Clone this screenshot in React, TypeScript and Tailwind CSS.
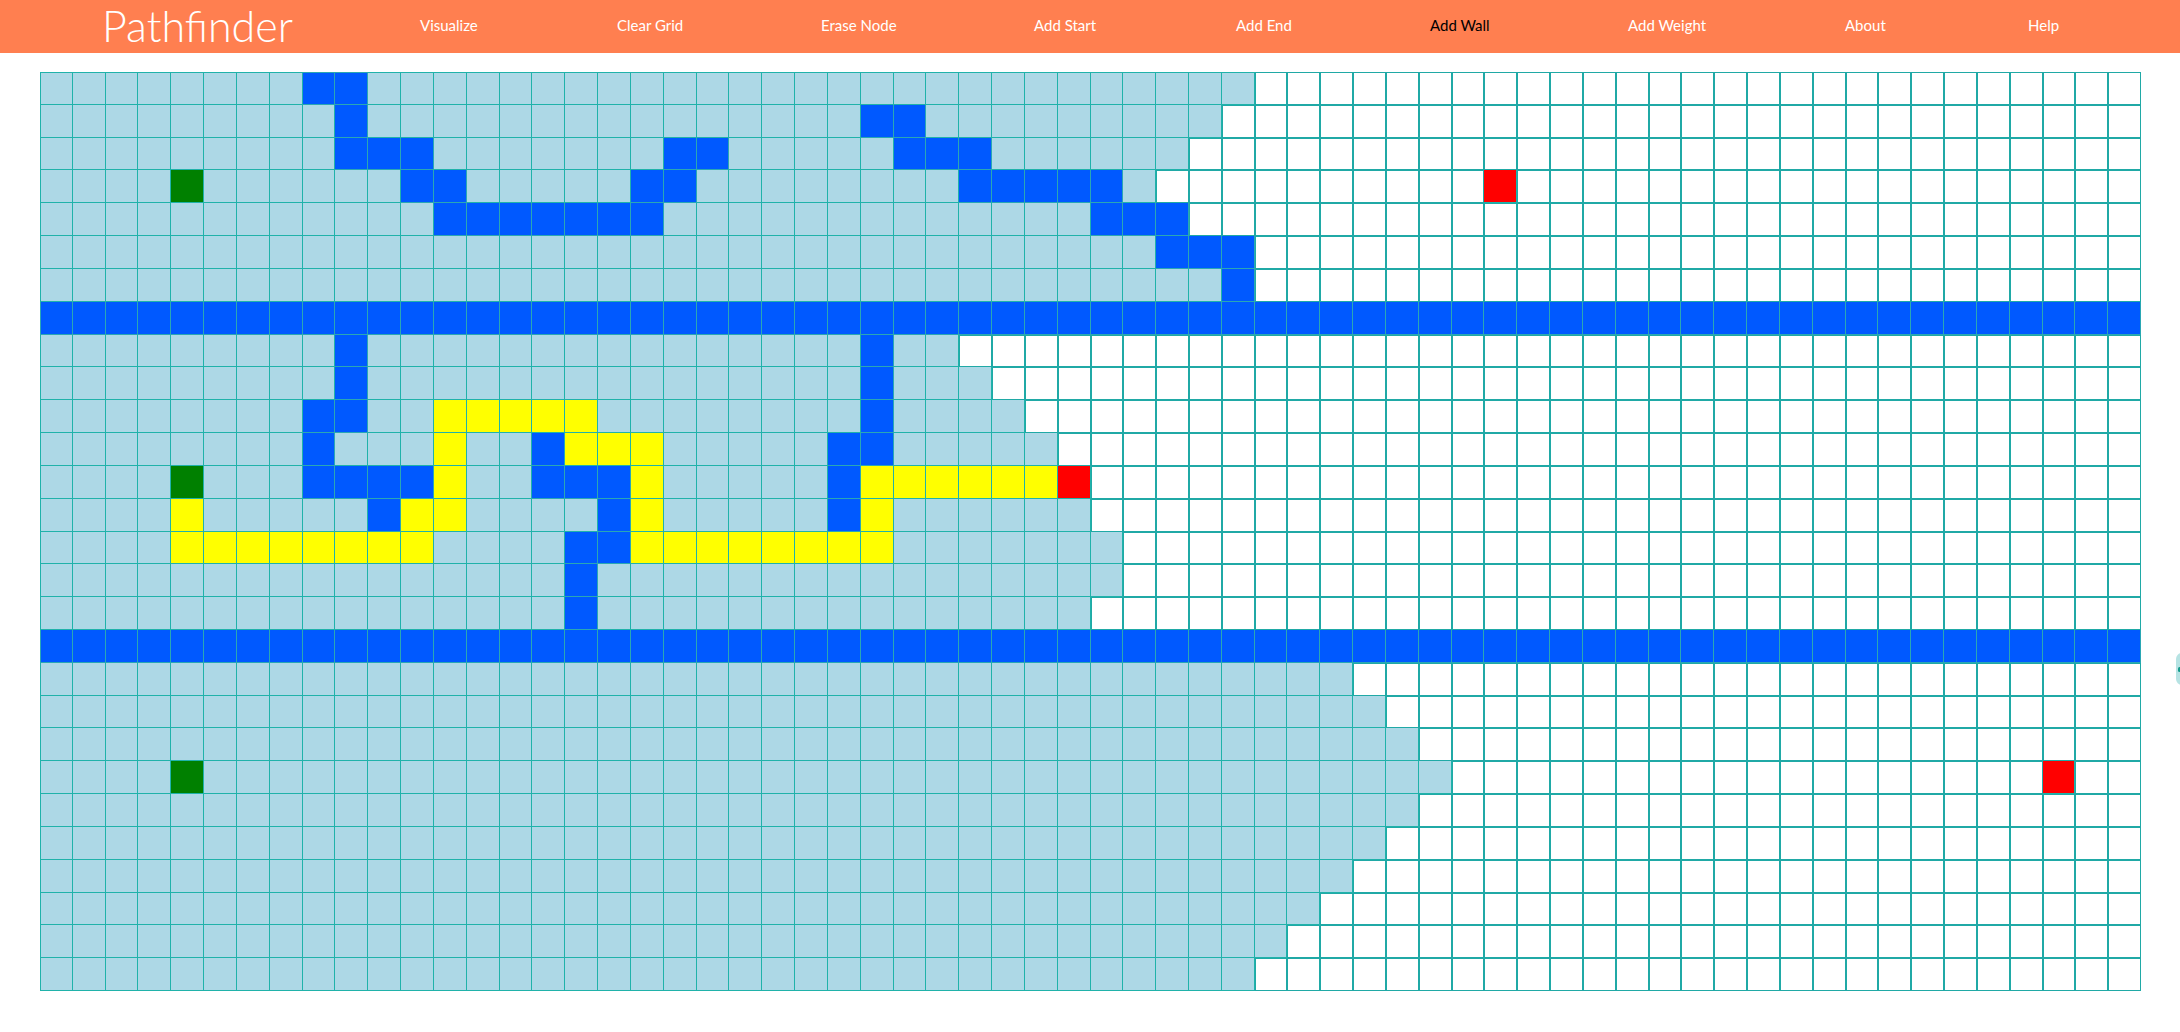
import { useMemo } from "react";

type CellKind = "empty" | "visited" | "wall" | "path" | "start" | "end";

type RowSpec = {
  visited: number;
  walls?: number[];
  path?: number[];
  start?: number;
  end?: number;
  fullWall?: boolean;
};

const COLS = 64;

const range = (a: number, b: number) => Array.from({ length: b - a + 1 }, (_, i) => a + i);

const ROWS: RowSpec[] = [
  { visited: 36, walls: [8, 9] },
  { visited: 35, walls: [9, 25, 26] },
  { visited: 34, walls: [9, 10, 11, 19, 20, 26, 27, 28] },
  { visited: 33, walls: [11, 12, 18, 19, ...range(28, 32)], start: 4, end: 44 },
  { visited: 31, walls: [...range(12, 18), 32, 33, 34] },
  { visited: 33, walls: [34, 35, 36] },
  { visited: 35, walls: [36] },
  { visited: -1, fullWall: true },
  { visited: 27, walls: [9, 25] },
  { visited: 28, walls: [9, 25] },
  { visited: 29, walls: [8, 9, 25], path: range(12, 16) },
  { visited: 30, walls: [8, 15, 24, 25], path: [12, 16, 17, 18] },
  { visited: 30, walls: [8, 9, 10, 11, 15, 16, 17, 24], path: [12, 18, ...range(25, 30)], start: 4, end: 31 },
  { visited: 31, walls: [10, 17, 24], path: [4, 11, 12, 18, 25] },
  { visited: 32, walls: [16, 17], path: [...range(4, 11), ...range(18, 25)] },
  { visited: 32, walls: [16] },
  { visited: 31, walls: [16] },
  { visited: -1, fullWall: true },
  { visited: 39 },
  { visited: 40 },
  { visited: 41 },
  { visited: 42, start: 4, end: 61 },
  { visited: 41 },
  { visited: 40 },
  { visited: 39 },
  { visited: 38 },
  { visited: 37 },
  { visited: 36 },
];

const NAV = [
  { label: "Visualize", w: "w-[52px]" },
  { label: "Clear Grid", w: "w-[59px]" },
  { label: "Erase Node", w: "w-[68px]" },
  { label: "Add Start", w: "w-[57px]" },
  { label: "Add End", w: "w-[49px]" },
  { label: "Add Wall", w: "w-[53px]", active: true },
  { label: "Add Weight", w: "w-[72px]" },
  { label: "About", w: "w-[38px]" },
  { label: "Help", w: "w-[27px]" },
];

const kindOf = (row: RowSpec, c: number): CellKind => {
  if (row.fullWall) return "wall";
  if (row.start === c) return "start";
  if (row.end === c) return "end";
  if (row.walls?.includes(c)) return "wall";
  if (row.path?.includes(c)) return "path";
  if (c <= row.visited) return "visited";
  return "empty";
};

const fill: Record<CellKind, string> = {
  empty: "bg-white border border-[#20a9a6]",
  visited: "bg-[#add8e6] border-r border-b border-[#20b2aa]",
  wall: "bg-[#0059ff] border-r border-b border-[#2aa7b4]",
  path: "bg-[#ffff00] border-r border-b border-[#20b2aa]",
  start: "bg-[#008000] border-r border-b border-[#20b2aa]",
  end: "bg-[#ff0000] border-r border-b border-[#20b2aa]",
};

function Header() {
  return (
    <header className="h-[53px] bg-[#ff7f50] flex items-center font-['Lato','Open_Sans',sans-serif]">
      <div className="w-[420px] pl-[102px] pb-[2px] text-white text-[43px] font-light leading-none">
        Pathfinder
      </div>
      <nav className="flex items-center gap-[145px] pb-[2px]">
        {NAV.map(({ label, w, active }) => (
          <span
            key={label}
            className={`${w} text-center whitespace-nowrap text-[15px] ${active ? "text-black" : "text-white"}`}
          >
            {label}
          </span>
        ))}
      </nav>
    </header>
  );
}

function Grid() {
  const cells = useMemo(
    () =>
      ROWS.flatMap((row, r) =>
        Array.from({ length: COLS }, (_, c) => {
          const kind = kindOf(row, c);
          const edge = kind === "empty" ? "" : `${r === 0 ? "border-t" : ""} ${c === 0 ? "border-l" : ""}`;
          return <div key={`${r}-${c}`} className={`${fill[kind]} ${edge}`} />;
        })
      ),
    []
  );

  return (
    <div className="ml-[40px] mt-[19px] w-[2101px] h-[919px] grid grid-cols-[repeat(64,minmax(0,1fr))] grid-rows-[repeat(28,minmax(0,1fr))]">
      {cells}
    </div>
  );
}

export default function App() {
  return (
    <div className="min-h-[1032px] bg-white relative overflow-hidden">
      <Header />
      <Grid />
      <div className="absolute right-[-14px] top-[653px] w-[18px] h-[32px] rounded-md bg-[#b6e3e3] flex items-center pl-[2px]">
        <span className="w-[3px] h-[5px] bg-[#149c8c] rounded-sm" />
      </div>
    </div>
  );
}
